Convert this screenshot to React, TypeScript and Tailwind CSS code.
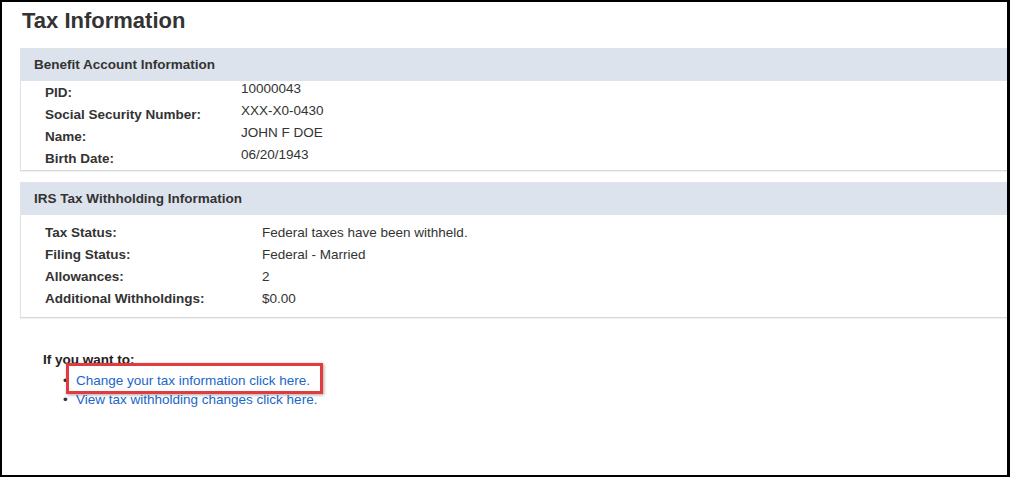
const benefitRows = [
  { label: "PID:", value: "10000043" },
  { label: "Social Security Number:", value: "XXX-X0-0430" },
  { label: "Name:", value: "JOHN F DOE" },
  { label: "Birth Date:", value: "06/20/1943" },
];

const irsRows = [
  { label: "Tax Status:", value: "Federal taxes have been withheld." },
  { label: "Filing Status:", value: "Federal - Married" },
  { label: "Allowances:", value: "2" },
  { label: "Additional Withholdings:", value: "$0.00" },
];

export default function App() {
  return (
    <div className="w-[1010px] h-[477px] bg-white overflow-hidden font-['Liberation_Sans',Arial,sans-serif] text-[#333]">
      <div className="w-[1010px] h-[477px] border-2 border-r-[3px] border-black">
        <h1 className="pl-[20px] pt-[5px] text-[22px] font-bold leading-[28px] text-[#333]">Tax Information</h1>

        {/* Benefit account */}
        <section className="ml-[18px] mt-[13px] border border-r-0 border-[#dfe3ea] border-b-[#d8d8d8] shadow-[0_1px_1px_rgba(0,0,0,0.05)]">
          <div className="h-[32px] bg-[#dde3ec] pl-[13px] flex items-center text-[13.5px] font-bold">
            Benefit Account Information
          </div>
          <div className="pl-[24px] pt-[1px] pb-0">
            {benefitRows.map((r) => (
              <div key={r.label} className="flex h-[22px] text-[13.5px] leading-[16px]">
                <span className="w-[196px] font-bold pt-[3px]">{r.label}</span>
                <span className="-mt-[1px]">{r.value}</span>
              </div>
            ))}
          </div>
        </section>

        {/* IRS */}
        <section className="ml-[18px] mt-[11px] border border-r-0 border-[#dfe3ea] border-b-[#d8d8d8] shadow-[0_1px_1px_rgba(0,0,0,0.05)]">
          <div className="h-[32px] bg-[#dde3ec] pl-[13px] flex items-center text-[13.5px] font-bold">
            IRS Tax Withholding Information
          </div>
          <div className="pl-[24px] pt-[7px] pb-[7px]">
            {irsRows.map((r) => (
              <div key={r.label} className="flex h-[22px] items-center text-[13.5px]">
                <span className="w-[217px] font-bold">{r.label}</span>
                <span>{r.value}</span>
              </div>
            ))}
          </div>
        </section>

        {/* Links */}
        <div className="pl-[41px] pt-[34px] text-[13.5px]">
          <p className="font-bold leading-[16px] text-[#222]">If you want to:</p>
          <ul className="pl-[20px] mt-[3px]">
            <li className="flex items-center h-[19px] leading-[19px]">
              <span className="w-[13px] text-[#333]">•</span>
              <span className="relative">
                <a className="text-[#1a66c9]">Change your tax information click here.</a>
                <span className="absolute -left-[10px] -right-[13px] -top-[8px] -bottom-[4px] border-[3px] border-[#e23b3f] shadow-[1px_1px_3px_rgba(0,0,0,0.35)]" />
              </span>
            </li>
            <li className="flex items-center h-[19px] leading-[19px]">
              <span className="w-[13px] text-[#333]">•</span>
              <a className="text-[#1a66c9]">View tax withholding changes click here.</a>
            </li>
          </ul>
        </div>
      </div>
    </div>
  );
}
